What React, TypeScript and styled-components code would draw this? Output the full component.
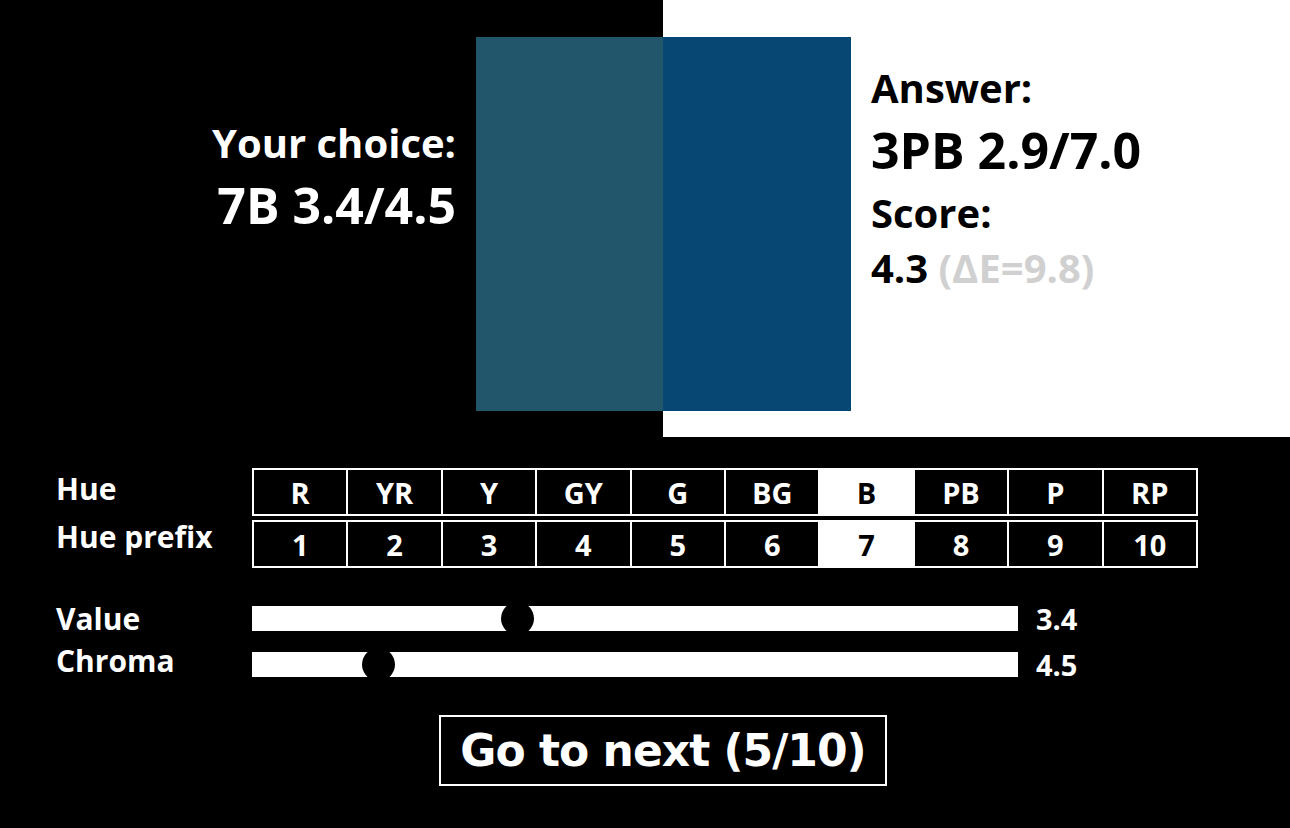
import { useState } from "react";
import { createGlobalStyle, styled } from "styled-components";

const HUES = ["R", "YR", "Y", "GY", "G", "BG", "B", "PB", "P", "RP"];
const PREFIXES = ["1", "2", "3", "4", "5", "6", "7", "8", "9", "10"];

const GlobalStyle = createGlobalStyle`
  html, body {
    margin: 0;
    padding: 0;
    background: #000;
  }
  body {
    font-family: "Open Sans", "Noto Sans", sans-serif;
    font-weight: 700;
    color: #fff;
  }
`;

const Page = styled.main`
  min-height: 100vh;
  background: #000;
`;

const Result = styled.section`
  display: grid;
  grid-template-columns: 663px 1fr;
  height: 437px;
`;

const Side = styled.div<{ $light?: boolean }>`
  display: flex;
  gap: 20px;
  justify-content: ${(p) => (p.$light ? "flex-start" : "flex-end")};
  align-items: flex-start;
  background: ${(p) => (p.$light ? "#fff" : "#000")};
  color: ${(p) => (p.$light ? "#000" : "#fff")};
`;

const Swatch = styled.div<{ $color: string; $width: number }>`
  width: ${(p) => p.$width}px;
  height: 374px;
  margin-top: 37px;
  background: ${(p) => p.$color};
`;

const Readout = styled.div<{ $top: number; $right?: boolean }>`
  margin-top: ${(p) => p.$top}px;
  text-align: ${(p) => (p.$right ? "right" : "left")};
  white-space: nowrap;
`;

const Heading = styled.div`
  font-size: 40px;
  line-height: 55px;
`;

const Notation = styled.div`
  font-size: 50px;
  line-height: 70px;
`;

const Muted = styled.span`
  color: #d0d0d0;
`;

const Controls = styled.section`
  padding: 31px 0 0 56px;
`;

const Block = styled.div<{ $gap?: number }>`
  display: grid;
  grid-template-columns: 196px auto;
  align-items: start;
  margin-top: ${(p) => p.$gap ?? 0}px;
`;

const Labels = styled.div<{ $lh: number; $shift: number }>`
  font-size: 30px;
  line-height: ${(p) => p.$lh}px;
  margin-top: ${(p) => p.$shift}px;
`;

const Rows = styled.div`
  display: flex;
  flex-direction: column;
  gap: 4px;
  width: 946px;
`;

const HueRow = styled.div`
  display: grid;
  grid-template-columns: repeat(10, 1fr);
  gap: 2px;
  border: 2px solid #fff;
  background: #fff;
`;

const Cell = styled.button<{ $active?: boolean }>`
  height: 44px;
  padding: 0;
  border: 0;
  font-family: inherit;
  font-weight: 700;
  font-size: 29px;
  background: ${(p) => (p.$active ? "#fff" : "#000")};
  color: ${(p) => (p.$active ? "#000" : "#fff")};
  cursor: pointer;
`;

const Sliders = styled.div`
  display: grid;
  grid-template-columns: 766px auto;
  grid-auto-rows: 25px;
  column-gap: 18px;
  row-gap: 21px;
  align-items: center;
`;

const Range = styled.input`
  appearance: none;
  -webkit-appearance: none;
  display: block;
  width: 766px;
  height: 25px;
  margin: 0;
  padding: 0;
  background: transparent;

  &::-webkit-slider-runnable-track {
    height: 25px;
    background: #fff;
    border: 0;
  }

  &::-webkit-slider-thumb {
    -webkit-appearance: none;
    width: 33px;
    height: 33px;
    margin-top: -4px;
    border-radius: 50%;
    background: #000;
  }
`;

const SliderValue = styled.span`
  font-size: 29px;
  line-height: 25px;
`;

const Footer = styled.div`
  display: flex;
  justify-content: center;
  padding-left: 36px;
  margin-top: 33px;
`;

const NextButton = styled.button`
  width: 448px;
  height: 71px;
  padding: 0;
  border: 2px solid #fff;
  background: #000;
  color: #fff;
  font-family: "DejaVu Sans", Verdana, sans-serif;
  font-weight: 700;
  font-size: 44px;
  letter-spacing: -1px;
  cursor: pointer;
`;

export default function App() {
  const [hue, setHue] = useState("B");
  const [prefix, setPrefix] = useState("7");
  const [value, setValue] = useState(3.4);
  const [chroma, setChroma] = useState(4.5);

  return (
    <Page>
      <GlobalStyle />
      <Result>
        <Side>
          <Readout $top={115} $right>
            <Heading>Your choice:</Heading>
            <Notation>
              {prefix}
              {hue} {value.toFixed(1)}/{chroma.toFixed(1)}
            </Notation>
          </Readout>
          <Swatch $color="#22576b" $width={187} />
        </Side>
        <Side $light>
          <Swatch $color="#064773" $width={188} />
          <Readout $top={60}>
            <Heading>Answer:</Heading>
            <Notation>3PB 2.9/7.0</Notation>
            <Heading>Score:</Heading>
            <Heading>
              4.3 <Muted>(ΔE=9.8)</Muted>
            </Heading>
          </Readout>
        </Side>
      </Result>

      <Controls>
        <Block>
          <Labels $lh={48} $shift={-3}>
            <div>Hue</div>
            <div>Hue prefix</div>
          </Labels>
          <Rows>
            <HueRow>
              {HUES.map((h) => (
                <Cell key={h} $active={h === hue} onClick={() => setHue(h)}>
                  {h}
                </Cell>
              ))}
            </HueRow>
            <HueRow>
              {PREFIXES.map((n) => (
                <Cell key={n} $active={n === prefix} onClick={() => setPrefix(n)}>
                  {n}
                </Cell>
              ))}
            </HueRow>
          </Rows>
        </Block>

        <Block $gap={38}>
          <Labels $lh={42} $shift={-8}>
            <div>Value</div>
            <div>Chroma</div>
          </Labels>
          <Sliders>
            <Range
              type="range"
              min={0}
              max={10}
              step={0.1}
              value={value}
              onChange={(e) => setValue(Number(e.target.value))}
            />
            <SliderValue>{value.toFixed(1)}</SliderValue>
            <Range
              type="range"
              min={0}
              max={30}
              step={0.1}
              value={chroma}
              onChange={(e) => setChroma(Number(e.target.value))}
            />
            <SliderValue>{chroma.toFixed(1)}</SliderValue>
          </Sliders>
        </Block>
      </Controls>

      <Footer>
        <NextButton>Go to next (5/10)</NextButton>
      </Footer>
    </Page>
  );
}
